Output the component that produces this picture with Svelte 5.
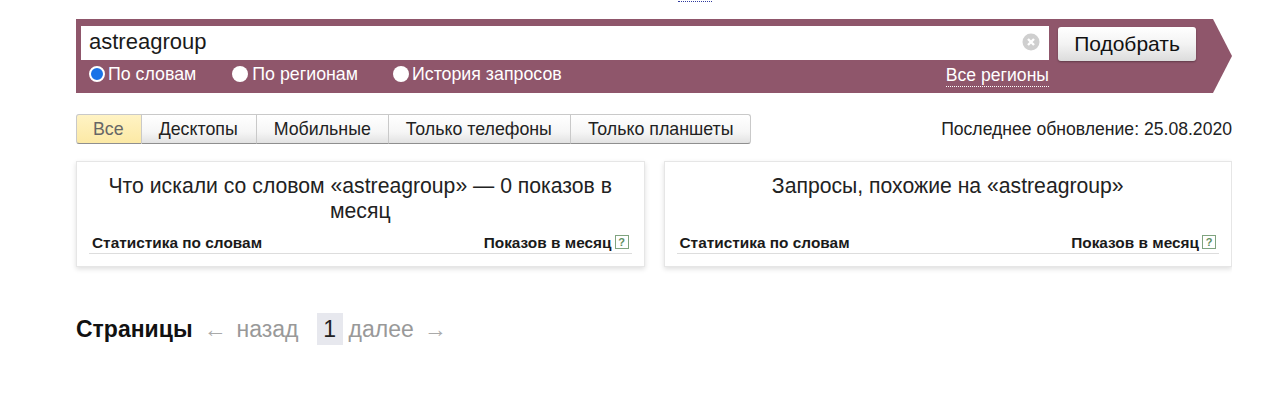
<script>
    let query = 'astreagroup';
    let mode = 'words';
    let device = 'Все';

    const modes = [
        { id: 'words', label: 'По словам' },
        { id: 'regions', label: 'По регионам' },
        { id: 'history', label: 'История запросов' }
    ];
    const devices = ['Все', 'Десктопы', 'Мобильные', 'Только телефоны', 'Только планшеты'];
    const panels = [
        { title: 'Что искали со словом «astreagroup» — 0 показов в месяц' },
        { title: 'Запросы, похожие на «astreagroup»' }
    ];
</script>

<div class="page">
    <div class="topLink"></div>

    <form class="search" on:submit|preventDefault>
        <div class="searchMain">
            <div class="inputBox">
                <input bind:value={query} />
                <svg class="clear" width="18" height="18" viewBox="0 0 18 18">
                    <circle cx="9" cy="9" r="8.5" fill="#cfcfcf" />
                    <path d="M6 6l6 6M12 6l-6 6" stroke="#fff" stroke-width="2.4" />
                </svg>
            </div>
            <div class="options">
                {#each modes as m}
                    <label class="option">
                        <span class={`radio ${mode === m.id ? 'on' : ''}`}></span>
                        <input type="radio" bind:group={mode} value={m.id} />
                        {m.label}
                    </label>
                {/each}
                <span class="regions">Все регионы</span>
            </div>
        </div>
        <button class="submit" type="submit">Подобрать</button>
    </form>

    <div class="toolbar">
        <div class="tabs">
            {#each devices as d}
                <button class={`tab ${device === d ? 'active' : ''}`} on:click={() => device = d}>{d}</button>
            {/each}
        </div>
        <div class="updated">Последнее обновление: 25.08.2020</div>
    </div>

    <div class="panels">
        {#each panels as p}
            <div class="panel">
                <h2>{p.title}</h2>
                <div class="head">
                    <span>Статистика по словам</span>
                    <span class="count">Показов в месяц<span class="help">?</span></span>
                </div>
            </div>
        {/each}
    </div>

    <div class="pager">
        <b>Страницы</b>
        <span class="arrow prev">←</span>
        <span class="link">назад</span>
        <span class="current">1</span>
        <span class="link">далее</span>
        <span class="arrow next">→</span>
    </div>
</div>

<style>
    :global(body){
        background: #fff;
        font-family: "Liberation Sans", Arial, sans-serif;
        color: #1a1a1a;
    }

    .page{
        width: 1156px;
        height: 417px;
        padding: 0 0 0 76px;
        overflow: hidden;
    }

    .topLink{
        width: 34px;
        height: 19px;
        margin-left: 602px;
        box-sizing: border-box;
        border-top: 1px dotted #2f3a9e;
        transform: translateY(1px);
    }

    .search{
        position: relative;
        display: flex;
        height: 74px;
        width: 1156px;
        box-sizing: border-box;
        padding: 7px 0 0 5px;
        background: #8f566b;
        clip-path: polygon(0 0, 1137px 0, 1156px 37px, 1137px 74px, 0 74px);
    }

    .searchMain{
        width: 968px;
    }

    .inputBox{
        display: flex;
        align-items: center;
        height: 34px;
        background: #fff;
        padding: 0 9px 0 8px;
    }

    .inputBox input{
        flex: 1;
        border: 0;
        outline: 0;
        padding: 0 0 3px;
        font: 22px "Liberation Sans", Arial, sans-serif;
        color: #1a1a1a;
        background: none;
    }

    .clear{
        margin-bottom: 2px;
    }

    .options{
        display: flex;
        align-items: center;
        height: 28px;
        padding-left: 8px;
        font-size: 17.8px;
        color: #fff;
    }

    .option{
        display: flex;
        align-items: center;
        gap: 3px;
        margin-right: 35px;
    }

    .option:first-child{
        margin-right: 36px;
    }

    .option:nth-child(2){
        gap: 4px;
    }

    .option input{
        display: none;
    }

    .radio{
        width: 16px;
        height: 16px;
        box-sizing: border-box;
        border-radius: 50%;
        background: #fff;
    }

    .radio.on{
        background: #1a73e8;
        border: 2px solid #fff;
        box-shadow: inset 0 0 0 1px #1a73e8;
    }

    .regions{
        margin-left: auto;
        border-bottom: 1px dotted #fff;
        font-size: 17.6px;
        line-height: 22px;
        margin-top: 3px;
    }

    .submit{
        width: 138px;
        height: 34px;
        margin: 1px 0 0 9px;
        border: 0;
        border-radius: 3px;
        background: linear-gradient(#fff, #f3f3f3 50%, #dcdcdc);
        box-shadow: 0 1px 2px #0005;
        font: 21px "Liberation Sans", Arial, sans-serif;
        color: #111;
        padding: 0;
    }

    .toolbar{
        display: flex;
        align-items: center;
        justify-content: space-between;
        margin-top: 21px;
        height: 30px;
    }

    .tabs{
        display: flex;
    }

    .tab{
        height: 30px;
        padding: 0 17px;
        border: 1px solid #c9c9c9;
        border-left: 0;
        border-bottom: 1px solid #8f8f8f;
        background: linear-gradient(#fff, #f6f6f6 60%, #e2e2e2);
        font: 17.8px "Liberation Sans", Arial, sans-serif;
        color: #222;
    }

    .tab:first-child{
        padding-left: 16px;
        border-left: 1px solid #c9c9c9;
        border-radius: 3px 0 0 3px;
    }

    .tab:nth-child(2), .tab:nth-child(4){
        padding-right: 18px;
    }

    .tab:last-child{
        padding-right: 16px;
        border-radius: 0 3px 3px 0;
    }

    .tab.active{
        background: linear-gradient(#fff3c4, #fce9a5);
        color: #666;
    }

    .updated{
        font-size: 17.6px;
        color: #222;
    }

    .panels{
        display: flex;
        gap: 19px;
        margin-top: 17px;
    }

    .panel{
        flex: 1;
        height: 106px;
        box-sizing: border-box;
        padding: 11px 12px 0;
        background: #fff;
        border: 1px solid #e6e6e6;
        box-shadow: 0 2px 5px #0002;
    }

    .panel h2{
        margin: 0;
        height: 57px;
        padding: 0 8px;
        font-size: 21.2px;
        font-weight: 400;
        line-height: 25px;
        text-align: center;
        color: #222;
    }

    .head{
        display: flex;
        justify-content: space-between;
        padding: 5px 3px 2px;
        border-bottom: 1px solid #ddd;
        font-size: 15.4px;
        font-weight: 700;
        line-height: 16px;
    }

    .count{
        display: flex;
        align-items: center;
    }

    .help{
        width: 12px;
        height: 12px;
        margin: -3px 0 0 3px;
        border: 1px solid #7fa37f;
        font-size: 11px;
        line-height: 12px;
        text-align: center;
        color: #5f8f5f;
    }

    .pager{
        display: flex;
        align-items: center;
        margin-top: 46px;
        height: 32px;
        font-size: 23px;
        color: #999;
    }

    .pager b{
        color: #111;
        margin-right: 11px;
    }

    .arrow{
        font-size: 23px;
        color: #aaa;
    }

    .prev{
        margin-right: 10px;
    }

    .current{
        width: 26px;
        margin: 0 6px 0 18px;
        line-height: 32px;
        text-align: center;
        background: #e7e8ee;
        color: #222;
    }

    .next{
        margin-left: 10px;
    }
</style>
